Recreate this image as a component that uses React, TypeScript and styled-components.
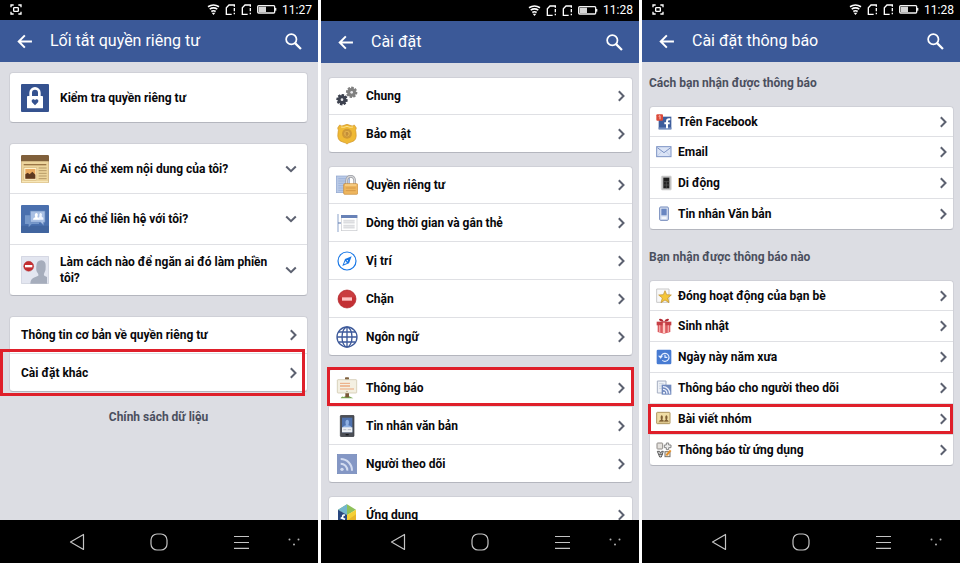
import React from "react";
import styled, { createGlobalStyle, css } from "styled-components";

const GlobalStyle = createGlobalStyle`
  *, *::before, *::after { box-sizing: border-box; }
  body { margin: 0; background: #fff; font-family: Roboto, "Noto Sans", sans-serif; }
  button { font: inherit; border: 0; background: none; padding: 0; cursor: pointer; color: inherit; }
  a { color: inherit; text-decoration: none; }
  ul { list-style: none; margin: 0; padding: 0; }
  svg { display: block; flex: none; }
`;

type Density = "large" | "medium" | "small";

const Board = styled.div`
  display: grid;
  grid-template-columns: repeat(3, minmax(0, 1fr));
  gap: 3px;
  height: 100vh;
`;

const Phone = styled.section`
  display: flex;
  flex-direction: column;
  min-height: 0;
  background: #dcdde3;
`;

const StatusBar = styled.div<{ $tall?: boolean }>`
  display: flex;
  align-items: center;
  flex: none;
  height: ${(p) => (p.$tall ? 21 : 20)}px;
  padding: 0 6px 1px 10px;
  background: #000;
  color: #fff;
`;

const StatusIcons = styled.div`
  display: flex;
  align-items: center;
  gap: 5px;
  margin-left: auto;
`;

const Clock = styled.time`
  font-size: 12px;
  font-weight: 400;
  line-height: 16px;
`;

const TitleBar = styled.header`
  display: flex;
  align-items: center;
  flex: none;
  height: 42px;
  padding: 0 14px;
  background: #3b5998;
  color: #fff;
`;

const Title = styled.h1`
  flex: 1;
  margin: 0 0 0 15px;
  font-size: 16px;
  font-weight: 400;
  line-height: 24px;
  white-space: nowrap;
`;

const contentPadding = {
  large: "10px 10px 0 9px",
  medium: "14px 6px 0 7px",
  small: "13px 6px 0 7px",
};

const Content = styled.main<{ $density: Density }>`
  flex: 1;
  min-height: 0;
  overflow: hidden;
  display: flex;
  flex-direction: column;
  gap: ${(p) => (p.$density === "large" ? 20 : 13)}px;
  padding: ${(p) => contentPadding[p.$density]};
`;

const Card = styled.ul`
  flex: none;
  background: #fff;
  border: 1px solid #cfd0d7;
  border-bottom-color: #b4b6be;
  border-radius: 4px;
`;

const rowHeight = { large: 51, medium: 38, small: 31 };

const Item = styled.li<{ $density: Density }>`
  position: relative;
  display: flex;
  min-height: ${(p) => rowHeight[p.$density]}px;
  & + & { border-top: 1px solid #dfe0e4; }
  &:first-child { min-height: ${(p) => rowHeight[p.$density] - 2}px; }
`;

const rowLayout = {
  large: { gap: 11, left: 11, right: 10 },
  medium: { gap: 8, left: 7, right: 7 },
  small: { gap: 6, left: 6, right: 6 },
};

const rowStyle = css<{ $density: Density; $wide?: boolean }>`
  display: flex;
  flex: 1;
  align-items: center;
  gap: ${(p) => rowLayout[p.$density].gap}px;
  padding: 0 ${(p) => (p.$wide ? 10 : rowLayout[p.$density].right)}px 0
    ${(p) => (p.$wide ? 11 : rowLayout[p.$density].left)}px;
  color: #08080b;
  text-align: left;
`;

const RowLink = styled.a`${rowStyle}`;
const RowButton = styled.button`${rowStyle}`;

const Label = styled.span`
  flex: 1;
  font-size: 12px;
  font-weight: 700;
  line-height: 16px;
`;

const Highlight = styled.span<{ $inset: string }>`
  position: absolute;
  inset: ${(p) => p.$inset};
  border: 3px solid #df1f2a;
  pointer-events: none;
`;

const SectionHeading = styled.h2<{ $later?: boolean }>`
  margin: ${(p) => (p.$later ? 6 : 0)}px 0 1px;
  color: #4b4f5e;
  font-size: 12px;
  font-weight: 700;
  line-height: 17px;
`;

const PolicyLink = styled.a`
  align-self: center;
  margin-top: -3px;
  color: #4b4f5e;
  font-size: 12px;
  font-weight: 700;
  line-height: 16px;
`;

const NavBar = styled.nav`
  display: grid;
  grid-template-columns: 1fr 1fr 1fr 24px;
  flex: none;
  height: 43px;
  padding: 0 12px 0 36px;
  background: #000;
`;

const NavButton = styled.button`
  display: flex;
  align-items: center;
  justify-content: center;
`;

/* ---------- system icons ---------- */

const CaptureIcon = () => (
  <svg width="12" height="11" viewBox="0 0 36 33" fill="none" stroke="#fff" strokeWidth="4">
    <path d="M3 10V3h8M25 3h8v7M33 23v7h-8M11 30H3v-7" />
    <rect x="11" y="11" width="14" height="11" rx="2" />
  </svg>
);

const WifiIcon = () => (
  <svg width="13" height="11" viewBox="0 0 39 33" fill="none" stroke="#fff" strokeWidth="5">
    <path d="M3 8Q19.500 -2 36 8M8 15.500Q19.500 8 31 15.500M13 22.500Q19.500 18 26 22.500" />
    <path d="M14 26h11l-5.500 7z" fill="#fff" stroke="none" />
  </svg>
);

const SimIcon = () => (
  <svg width="11" height="11" viewBox="0 0 33 33" fill="none" stroke="#fff" strokeWidth="4">
    <path d="M20 31H4V11l8-8h16v5" />
    <path d="M28 12v10M28 26v5" />
  </svg>
);

const BatteryIcon = () => (
  <svg width="20" height="9" viewBox="0 0 60 27">
    <rect x="2" y="2" width="51" height="22" rx="3" fill="none" stroke="#f2f2f2" strokeWidth="4" />
    <rect x="5" y="5" width="22" height="16" fill="#d6d6d6" />
    <rect x="54" y="9" width="4" height="8" fill="#f2f2f2" />
  </svg>
);

const BackIcon = () => (
  <svg width="21" height="21" viewBox="0 0 24 24" fill="#fff">
    <path d="M20.500 10.800H8.200l5-5L11.600 4.200 3.800 12l7.800 7.800 1.600-1.600-5-5h12.300z" />
  </svg>
);

const SearchIcon = () => (
  <svg width="21" height="21" viewBox="0 0 24 24" fill="none" stroke="#fff" strokeWidth="2">
    <circle cx="9.500" cy="9.500" r="5.900" />
    <path d="M13.800 13.800 20.500 20.500" strokeWidth="2.600" />
  </svg>
);

const NavBack = () => (
  <svg width="16" height="18" viewBox="0 0 16 18" fill="none" stroke="#c4c4c4" strokeWidth="1.200">
    <path d="M14.500 1.500v15L1.500 9z" strokeLinejoin="round" />
  </svg>
);
const NavHome = () => (
  <svg width="18" height="18" viewBox="0 0 18 18" fill="none" stroke="#c4c4c4" strokeWidth="1.200">
    <rect x="1" y="1" width="16" height="16" rx="6" />
  </svg>
);
const NavMenu = () => (
  <svg width="15" height="14" viewBox="0 0 15 14" fill="none" stroke="#c4c4c4" strokeWidth="1.200">
    <path d="M0 1.500h15M0 7.500h15M0 13.300h15" />
  </svg>
);
const NavDots = () => (
  <svg width="12" height="8" viewBox="0 0 12 8" fill="#b0b0b0">
    <circle cx="1.500" cy="1.500" r="1" /><circle cx="10.500" cy="1.500" r="1" /><circle cx="6" cy="6.500" r="1" />
  </svg>
);

const ChevronRight = () => (
  <svg width="8" height="12" viewBox="0 0 8 12" fill="none" stroke="#5c6170" strokeWidth="2">
    <path d="M1.800 1.300 6.500 6l-4.700 4.700" />
  </svg>
);
const ChevronDown = () => (
  <svg width="12" height="8" viewBox="0 0 12 8" fill="none" stroke="#5c6170" strokeWidth="2">
    <path d="M1.200 1.500 6 6.200l4.800-4.700" />
  </svg>
);

/* ---------- privacy shortcut icons, 28px ---------- */

const Big = ({ children }: { children: React.ReactNode }) => (
  <svg width="28" height="28" viewBox="0 0 84 84">{children}</svg>
);

const PrivacyLock = () => (
  <Big>
    <rect width="84" height="84" rx="3" fill="#35528f" />
    <path d="M29 38V26a13 13 0 0 1 26 0v12" fill="none" stroke="#fff" strokeWidth="8" />
    <rect x="18" y="36" width="48" height="37" rx="2" fill="#fff" />
    <path d="M42 64l-9-9q-3-7 3-9 4-1 6 3 2-4 6-3 6 2 3 9z" fill="#35528f" />
  </Big>
);

const NewsIcon = () => (
  <Big>
    <rect x="1" y="3" width="82" height="81" rx="4" fill="#ecd49c" stroke="#bd9c62" strokeWidth="2" />
    <path d="M0 19V4q0-4 4-4h76q4 0 4 4v15z" fill="#80603b" />
    <path d="M8 29h68" stroke="#9a7647" strokeWidth="4" />
    <rect x="9" y="38" width="38" height="37" fill="#fff3cf" stroke="#b69458" />
    <rect x="13" y="42" width="30" height="29" fill="#e9a95f" />
    <path d="M13 71V58l7-5 6 5 8-8 9 9v12z" fill="#5d3921" />
    <path d="M53 39h24M53 47h24M53 55h24M53 63h24M53 71h24" stroke="#b69a68" strokeWidth="3" />
    <path d="M3 80h78" stroke="#f7e7b9" strokeWidth="4" />
  </Big>
);

const ChatIcon = () => (
  <Big>
    <rect width="84" height="84" rx="3" fill="#4a70ae" />
    <rect y="62" width="84" height="22" rx="3" fill="#41659f" />
    <path d="M12 31h42v26H32l-9 10V57H12z" fill="#7799ca" />
    <path d="M28 18h44v34h-4v9l-9-9H28z" fill="#a9c0e4" stroke="#6688bd" strokeWidth="2" />
    <path d="M36 44q0-6 7-7-4-10 2-13 7 0 5 8l-1 5q7 1 7 7z" fill="#fff" />
    <path d="M52 44q1-5 1-7 4-1 2-8 1-6 5-5 5 2 2 10 0 3 5 4v6z" fill="#eef4ff" />
  </Big>
);

const BlockPerson = () => (
  <Big>
    <rect x="1" y="1" width="82" height="82" rx="2" fill="#e3e6f0" stroke="#c3c7d4" strokeWidth="2" />
    <path d="M28 83q0-14 10-18l14-6q1-4-2-8-6-6-4-20 0-18 15-18 14 1 13 18 1 14-4 20-3 5 0 8l8 4v20z" fill="#a6adbc" />
    <circle cx="23" cy="31" r="15" fill="#c42e31" stroke="#a51d22" />
    <rect x="12" y="27" width="22" height="7" fill="#fff" />
  </Big>
);

/* ---------- settings icons, 22px ---------- */

const Mid = ({ children }: { children: React.ReactNode }) => (
  <svg width="22" height="22" viewBox="0 0 66 66">{children}</svg>
);

const Gear = ({ x, y, color }: { x: number; y: number; color: string }) => (
  <g transform={`translate(${x} ${y})`}>
    {[0, 45, 90, 135].map((a) => (
      <rect key={a} x="-4" y="-17" width="8" height="34" rx="1" fill={color} transform={`rotate(${a + 10})`} />
    ))}
    <circle r="13" fill={color} />
    <circle r="4" fill="#e9e9ec" />
  </g>
);

const GearsIcon = () => (
  <Mid>
    <Gear x={47} y={22} color="#808080" />
    <Gear x={18} y={44} color="#3d424f" />
  </Mid>
);

const BadgeIcon = () => (
  <Mid>
    <path d="M11 6q6 5 13 1l9-3 9 3q7 4 13-1l6 9q-4 6-1 14 4 24-14 28-9 2-13 6-4-4-13-6Q2 53 6 29q3-8-1-14z" fill="#efb935" stroke="#cf9325" strokeWidth="2" />
    <path d="M15 12q8 3 18-2 10 5 18 2" fill="none" stroke="#ffe28a" strokeWidth="3" />
    <circle cx="33" cy="32" r="15" fill="#d29a32" />
    <circle cx="33" cy="32" r="10" fill="#e4b14a" stroke="#c08d38" strokeWidth="2" />
    <path d="M29 27h6l3 5-3 6h-6z" fill="#c28d39" />
  </Mid>
);

const PagesLock = () => (
  <Mid>
    <rect x="1" y="6" width="40" height="50" fill="#b9c9e6" stroke="#8da4cf" strokeWidth="2" />
    <path d="M7 14h26M7 21h26M7 28h26M7 35h20M7 42h20M7 49h20" stroke="#8fa9d6" strokeWidth="2" />
    <path d="M32 31V20q1-13 12-13t12 13v11" fill="none" stroke="#9c9da3" strokeWidth="8" />
    <path d="M32 31V20q1-13 12-13t12 13v11" fill="none" stroke="#d5d6d9" strokeWidth="4" />
    <rect x="23" y="29" width="42" height="32" rx="3" fill="#eeb65f" stroke="#c58733" strokeWidth="2" />
    <path d="M27 33h34" stroke="#ffe0a4" strokeWidth="3" />
    <path d="M29 42h30M29 50h30" stroke="#d69a48" strokeWidth="3" />
  </Mid>
);

const TimelineIcon = () => (
  <Mid>
    <path d="M6 6v54" stroke="#a9bad8" strokeWidth="4" />
    <path d="M6 33h10" stroke="#5d79ad" strokeWidth="3" />
    <rect x="16" y="10" width="47" height="46" fill="#fff" stroke="#c6c8cd" strokeWidth="2" />
    <rect x="15" y="9" width="49" height="9" fill="#6882b7" />
    <path d="M22 26h34M22 32h34M22 41h34M22 47h34" stroke="#dcdde0" strokeWidth="5" />
  </Mid>
);

const CompassIcon = () => (
  <Mid>
    <circle cx="33" cy="33" r="27" fill="none" stroke="#1877e6" strokeWidth="3.500" />
    <path d="M47 19 39 40 19 48 27 27z" fill="#1877e6" />
    <path d="m24 43 4-10 5 6z" fill="#fff" />
    <circle cx="34" cy="32" r="2" fill="#fff" />
  </Mid>
);

const StopIcon = () => (
  <Mid>
    <circle cx="33" cy="33" r="27" fill="#c33034" stroke="#b1262b" strokeWidth="2" />
    <path d="M9 28Q14 9 33 8t24 20" fill="#ca3d40" />
    <rect x="18" y="28" width="30" height="10" fill="#ffc3c3" />
  </Mid>
);

const GlobeIcon = () => (
  <Mid>
    <g fill="none" stroke="#3e5a9a" strokeWidth="4">
      <circle cx="33" cy="33" r="30" />
      <ellipse cx="33" cy="33" rx="15" ry="30" />
      <path d="M33 3v60M3 33h60M8 18h50M8 48h50" />
    </g>
  </Mid>
);

const SignIcon = () => (
  <Mid>
    <path d="M14 64q4-8 9-4l5-2h12l4 2 8 4z" fill="#79a653" />
    <path d="M28 48h11v13H28z" fill="#7a593a" />
    <rect x="27" y="1" width="12" height="7" rx="2" fill="#80613f" />
    <rect x="4" y="8" width="58" height="40" rx="2" fill="#f4f0e2" stroke="#c8bfa5" strokeWidth="2" />
    <path d="M12 19h30M12 36h42" stroke="#eba67b" strokeWidth="3" />
    <path d="M12 27h30" stroke="#edb08a" strokeWidth="5" />
    <circle cx="33" cy="43" r="2" fill="#9a8e6e" />
  </Mid>
);

const PhoneIcon = () => (
  <Mid>
    <rect x="13" y="1" width="41" height="64" rx="3" fill="#4c4f56" stroke="#34363c" strokeWidth="2" />
    <rect x="18" y="8" width="31" height="44" fill="#4f72ae" />
    <path d="M20 39q1-7 10-8-5-15 4-17 8 2 3 17 9 1 10 8z" fill="#8fb1e3" />
    <path d="M18 37h31v15H18z" fill="#edf0f4" />
    <path d="M22 44h9M35 44h10" stroke="#c1c5ce" strokeWidth="4" />
    <rect x="29" y="57" width="9" height="4" fill="#17191d" />
  </Mid>
);

const FeedIcon = () => (
  <Mid>
    <rect x="4" y="4" width="58" height="58" fill="#8497c5" stroke="#7288b9" strokeWidth="2" />
    <circle cx="18" cy="49" r="5" fill="#d3dcf0" />
    <path d="M14 32a20 20 0 0 1 20 21M14 18a34 34 0 0 1 34 35" fill="none" stroke="#d3dcf0" strokeWidth="6" />
  </Mid>
);

const CubeIcon = () => (
  <Mid>
    <path d="M33 1 60 17 33 34 6 17z" fill="#8ec15a" />
    <path d="M33 1 6 17l27 17z" fill="#74b7cf" />
    <path d="M6 17v34l27 14V33z" fill="#29477f" />
    <path d="M33 33v32l27-14V17z" fill="#f4cf35" />
    <path d="M33 65V50l27-19v20z" fill="#e8b529" />
    <path d="M27 34q-7-3-7 4v18M14 41l13 5" fill="none" stroke="#fff" strokeWidth="5" />
  </Mid>
);

/* ---------- notification icons, 16px ---------- */

const Small = ({ children }: { children: React.ReactNode }) => (
  <svg width="16" height="16" viewBox="0 0 48 48">{children}</svg>
);

const FacebookBadge = () => (
  <Small>
    <rect x="8" y="8" width="38" height="38" fill="#3d5d9c" />
    <path d="M8 40h38v6H8z" fill="#6f8abd" />
    <path d="M43 16h-4q-6 0-6 7v20M25 28h16" fill="none" stroke="#fff" strokeWidth="6" />
    <rect x="1" y="1" width="20" height="19" rx="3" fill="#dc4a3a" />
    <path d="M8 7l4-2v11" fill="none" stroke="#f6c4bd" strokeWidth="3" />
  </Small>
);

const MailIcon = () => (
  <Small>
    <rect x="2" y="8" width="43" height="30" fill="#dbe4f6" stroke="#7c93c4" strokeWidth="3" />
    <path d="m4 11 20 15 20-15" fill="none" stroke="#7c93c4" strokeWidth="3" />
    <path d="M4 36l13-14M43 36 30 22" fill="none" stroke="#b4c3e3" strokeWidth="2" />
  </Small>
);

const MobileIcon = () => (
  <Small>
    <rect x="16" y="3" width="30" height="42" rx="3" fill="#bfbfbf" stroke="#d7d7d7" strokeWidth="2" />
    <rect x="22" y="8" width="18" height="32" fill="#202020" />
    <path d="M22 20h18M22 30h18M31 20v20" stroke="#5c5c5c" strokeWidth="2" />
  </Small>
);

const SmsIcon = () => (
  <Small>
    <rect x="11" y="3" width="26" height="40" rx="3" fill="#dce4f4" stroke="#7188ba" strokeWidth="3" />
    <rect x="16" y="8" width="16" height="20" fill="#6986c1" />
    <path d="M17 36h14" stroke="#fff" strokeWidth="4" />
  </Small>
);

const StarIcon = () => (
  <Small>
    <path d="M2 3h37v40H2z" fill="#f8f8f8" stroke="#c9c9c9" strokeWidth="3" />
    <path d="m27 8 5 12 14 1-11 9 4 14-12-8-12 8 4-14-11-9 14-1z" fill="#f4c639" stroke="#bd8b27" strokeWidth="2" />
  </Small>
);

const GiftIcon = () => (
  <Small>
    <path d="M5 21h38v21l-19 5-19-5z" fill="#dc5b60" />
    <path d="M2 11h44v11H2z" fill="#c63f46" />
    <path d="M11 22v20M37 22v20" stroke="#efa6a5" strokeWidth="4" />
    <path d="M24 14v32" stroke="#ffc9c2" strokeWidth="7" />
    <path d="M23 11Q10 12 9 3q10-3 15 8 5-11 15-8-1 9-16 8" fill="#b22932" />
  </Small>
);

const HistoryIcon = () => (
  <Small>
    <rect x="2" y="2" width="44" height="44" rx="4" fill="#477bd2" />
    <path d="M15 24a12 12 0 1 1 4 10M27 17v8h7" fill="none" stroke="#e6efff" strokeWidth="3.500" />
    <path d="M6 20h15l-7 9z" fill="#e6efff" />
  </Small>
);

const FollowerIcon = () => (
  <Small>
    <path d="M4 3h26v36H4z" fill="#eef1f7" stroke="#a6afc2" strokeWidth="3" />
    <path d="M9 11h14M9 18h8M9 25h8" stroke="#bdc5d5" strokeWidth="2" />
    <rect x="17" y="14" width="29" height="30" fill="#7189bd" />
    <circle cx="24" cy="38" r="3" fill="#fff" />
    <path d="M21 28a13 13 0 0 1 12 13M21 20a20 20 0 0 1 20 21" fill="none" stroke="#edf2ff" strokeWidth="4" />
  </Small>
);

const GroupIcon = () => (
  <Small>
    <rect x="2" y="4" width="40" height="34" rx="2" fill="#efdda5" stroke="#ae955e" strokeWidth="3" />
    <path d="M9 32q0-5 6-6-3-11 2-13 6 2 2 13l4 2v4zM24 32q0-5 5-6-3-11 2-13 6 2 2 13 5 1 5 6z" fill="#7e5f34" />
    <path d="M7 33h30" stroke="#b99b60" strokeWidth="2" />
  </Small>
);

const AppsIcon = () => (
  <Small>
    <rect x="3" y="3" width="17" height="18" rx="2" fill="#e4e1dd" stroke="#8e8a86" strokeWidth="3" />
    <path d="M31 3h7v6h7v8h-7v6h-7v-6h-6V9h6z" fill="#ececec" stroke="#858585" strokeWidth="3" />
    <path d="M4 28h7l3 6 3-6h5l-6 17h-5zM8 37h12" fill="#d8d8d8" stroke="#5c5c5c" strokeWidth="3" />
    <rect x="27" y="29" width="15" height="15" fill="#eee7da" stroke="#77736c" strokeWidth="3" />
    <path d="m31 40 13-15" stroke="#e4902b" strokeWidth="6" />
  </Small>
);

/* ---------- shared pieces ---------- */

interface Entry {
  label: string;
  icon?: React.ReactNode;
  highlight?: string;
  expandable?: boolean;
}

const List = ({ items, density, wide }: { items: Entry[]; density: Density; wide?: boolean }) => (
  <Card>
    {items.map(({ label, icon, highlight, expandable }) => (
      <Item key={label} $density={density}>
        {expandable ? (
          <RowButton type="button" aria-expanded={false} $density={density} $wide={wide}>
            {icon}
            <Label>{label}</Label>
            <ChevronDown />
          </RowButton>
        ) : (
          <RowLink href="#" $density={density} $wide={wide}>
            {icon}
            <Label>{label}</Label>
            {density !== "large" && <ChevronRight />}
          </RowLink>
        )}
        {highlight && <Highlight $inset={highlight} />}
      </Item>
    ))}
  </Card>
);

interface ScreenProps {
  title: string;
  time: string;
  density: Density;
  capture?: boolean;
  children: React.ReactNode;
}

const Screen = ({ title, time, density, capture, children }: ScreenProps) => (
  <Phone aria-label={title}>
    <StatusBar $tall={!capture}>
      {capture && <CaptureIcon />}
      <StatusIcons>
        <WifiIcon />
        <SimIcon />
        <SimIcon />
        <BatteryIcon />
        <Clock>{time}</Clock>
      </StatusIcons>
    </StatusBar>
    <TitleBar>
      <button type="button" aria-label="Quay lại"><BackIcon /></button>
      <Title>{title}</Title>
      <button type="button" aria-label="Tìm kiếm"><SearchIcon /></button>
    </TitleBar>
    <Content $density={density}>{children}</Content>
    <NavBar>
      <NavButton type="button" aria-label="Trở về"><NavBack /></NavButton>
      <NavButton type="button" aria-label="Màn hình chính"><NavHome /></NavButton>
      <NavButton type="button" aria-label="Menu"><NavMenu /></NavButton>
      <NavButton type="button" aria-label="Thêm"><NavDots /></NavButton>
    </NavBar>
  </Phone>
);

/* ---------- data ---------- */

const checkup: Entry[] = [{ label: "Kiểm tra quyền riêng tư", icon: <PrivacyLock /> }];

const questions: Entry[] = [
  { label: "Ai có thể xem nội dung của tôi?", icon: <NewsIcon />, expandable: true },
  { label: "Ai có thể liên hệ với tôi?", icon: <ChatIcon />, expandable: true },
  { label: "Làm cách nào để ngăn ai đó làm phiền tôi?", icon: <BlockPerson />, expandable: true },
];

const more: Entry[] = [
  { label: "Thông tin cơ bản về quyền riêng tư" },
  { label: "Cài đặt khác", highlight: "-5px 2px -5px -10px" },
];

const general: Entry[] = [
  { label: "Chung", icon: <GearsIcon /> },
  { label: "Bảo mật", icon: <BadgeIcon /> },
];

const privacy: Entry[] = [
  { label: "Quyền riêng tư", icon: <PagesLock /> },
  { label: "Dòng thời gian và gắn thẻ", icon: <TimelineIcon /> },
  { label: "Vị trí", icon: <CompassIcon /> },
  { label: "Chặn", icon: <StopIcon /> },
  { label: "Ngôn ngữ", icon: <GlobeIcon /> },
];

const notices: Entry[] = [
  { label: "Thông báo", icon: <SignIcon />, highlight: "-3px -2px 0 -2px" },
  { label: "Tin nhắn văn bản", icon: <PhoneIcon /> },
  { label: "Người theo dõi", icon: <FeedIcon /> },
];

const apps: Entry[] = [{ label: "Ứng dụng", icon: <CubeIcon /> }];

const channels: Entry[] = [
  { label: "Trên Facebook", icon: <FacebookBadge /> },
  { label: "Email", icon: <MailIcon /> },
  { label: "Di động", icon: <MobileIcon /> },
  { label: "Tin nhắn Văn bản", icon: <SmsIcon /> },
];

const topics: Entry[] = [
  { label: "Đóng hoạt động của bạn bè", icon: <StarIcon /> },
  { label: "Sinh nhật", icon: <GiftIcon /> },
  { label: "Ngày này năm xưa", icon: <HistoryIcon /> },
  { label: "Thông báo cho người theo dõi", icon: <FollowerIcon /> },
  { label: "Bài viết nhóm", icon: <GroupIcon />, highlight: "0 0 0 -2px" },
  { label: "Thông báo từ ứng dụng", icon: <AppsIcon /> },
];

export default function App() {
  return (
    <>
      <GlobalStyle />
      <Board>
        <Screen title="Lối tắt quyền riêng tư" time="11:27" density="large" capture>
          <List items={checkup} density="large" wide />
          <List items={questions} density="large" wide />
          <List items={more} density="medium" wide />
          <PolicyLink href="#">Chính sách dữ liệu</PolicyLink>
        </Screen>
        <Screen title="Cài đặt" time="11:28" density="medium">
          <List items={general} density="medium" />
          <List items={privacy} density="medium" />
          <List items={notices} density="medium" />
          <List items={apps} density="medium" />
        </Screen>
        <Screen title="Cài đặt thông báo" time="11:28" density="small" capture>
          <SectionHeading>Cách bạn nhận được thông báo</SectionHeading>
          <List items={channels} density="small" />
          <SectionHeading $later>Bạn nhận được thông báo nào</SectionHeading>
          <List items={topics} density="small" />
        </Screen>
      </Board>
    </>
  );
}
